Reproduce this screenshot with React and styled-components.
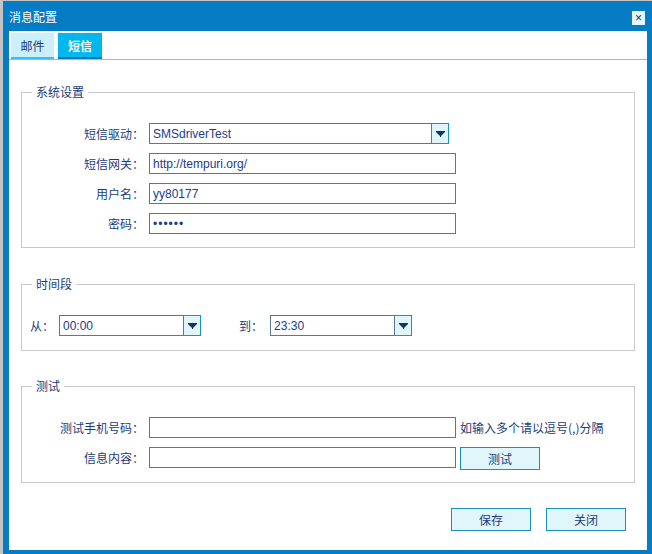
import React from "react";
import styled, { createGlobalStyle } from "styled-components";

const GlobalStyle = createGlobalStyle`
  html, body {
    margin: 0;
    padding: 0;
    background: #c4c4c4;
  }
  * {
    box-sizing: border-box;
  }
`;

const NAVY = "#1b3c7a";

function Arrow() {
  return (
    <svg width="9" height="6" viewBox="0 0 9 6">
      <path d="M0 0H9V1L5 5V6H4V5L0 1Z" fill="#0d3566" />
    </svg>
  );
}

function Combo({ width, value }) {
  return (
    <ComboBox $width={width}>
      <ComboText readOnly defaultValue={value} />
      <ComboButton>
        <Arrow />
      </ComboButton>
    </ComboBox>
  );
}

export default function App() {
  return (
    <>
      <GlobalStyle />
      <Page>
        <Dialog>
          <TitleBar>
            <Title>消息配置</Title>
            <CloseButton>×</CloseButton>
          </TitleBar>
          <Body>
            <Tabs>
              <Tab>邮件</Tab>
              <Tab $active>短信</Tab>
            </Tabs>

            <Content>
              <Group $top={24} $bottom={13}>
                <Legend>系统设置</Legend>
                <Rows>
                  <Row>
                    <Label>短信驱动：</Label>
                    <Combo width={300} value="SMSdriverTest" />
                  </Row>
                  <Row>
                    <Label>短信网关：</Label>
                    <TextInput readOnly defaultValue="http://tempuri.org/" />
                  </Row>
                  <Row>
                    <Label>用户名：</Label>
                    <TextInput readOnly defaultValue="yy80177" />
                  </Row>
                  <Row>
                    <Label>密码：</Label>
                    <TextInput type="password" readOnly defaultValue="123456" />
                  </Row>
                </Rows>
              </Group>

              <Group $gap={29} $bottom={13}>
                <Legend>时间段</Legend>
                <TimeRow>
                  <ShortLabel>从：</ShortLabel>
                  <Combo width={142} value="00:00" />
                  <ShortLabel $left={38}>到：</ShortLabel>
                  <Combo width={142} value="23:30" />
                </TimeRow>
              </Group>

              <Group $gap={28} $top={24}>
                <Legend>测试</Legend>
                <Rows>
                  <Row>
                    <Label>测试手机号码：</Label>
                    <TextInput readOnly defaultValue="" />
                    <Hint>如输入多个请以逗号(,)分隔</Hint>
                  </Row>
                  <Row>
                    <Label>信息内容：</Label>
                    <TextInput readOnly defaultValue="" />
                    <Button $ml={4}>测试</Button>
                  </Row>
                </Rows>
              </Group>

              <Footer>
                <Button>保存</Button>
                <Button>关闭</Button>
              </Footer>
            </Content>
          </Body>
        </Dialog>
      </Page>
    </>
  );
}

const Page = styled.div`
  width: 652px;
  height: 554px;
  padding: 1px 0 0 3px;
  font-family: "Noto Sans CJK SC", "Liberation Sans", sans-serif;
  font-size: 12px;
  color: ${NAVY};
`;

const Dialog = styled.div`
  display: flex;
  flex-direction: column;
  width: 649px;
  height: 553px;
  padding: 0 5px 4px 6px;
  background: #057cc4;
`;

const TitleBar = styled.div`
  display: flex;
  align-items: center;
  justify-content: space-between;
  height: 30px;
  padding: 0 2px 0 0;
`;

const Title = styled.div`
  color: #fff;
  font-size: 12px;
  line-height: 14px;
  margin-top: 1px;
`;

const CloseButton = styled.div`
  display: flex;
  align-items: center;
  justify-content: center;
  width: 13px;
  height: 14px;
  margin-top: 3px;
  background: #e4f8fd;
  color: #15355f;
  font-family: "Liberation Sans", sans-serif;
  font-size: 12px;
  line-height: 1;
`;

const Body = styled.div`
  flex: 1;
  display: flex;
  flex-direction: column;
  background: #fff;
`;

const Tabs = styled.div`
  display: flex;
  gap: 4px;
  height: 29px;
  padding: 2px 0 0 2px;
  border-bottom: 1px solid #b3b3b3;
`;

const Tab = styled.div`
  display: flex;
  align-items: center;
  justify-content: center;
  width: ${(p) => (p.$active ? 44 : 43)}px;
  height: 26px;
  padding-top: 1px;
  background: ${(p) => (p.$active ? "#00b7ee" : "#ccf0fb")};
  border-bottom: 2px solid ${(p) => (p.$active ? "#0a76b6" : "#33c2f3")};
  color: ${(p) => (p.$active ? "#fff" : NAVY)};
  font-weight: ${(p) => (p.$active ? 700 : 400)};
  font-size: 12px;
`;

const Content = styled.div`
  display: flex;
  flex-direction: column;
  padding: 0 12px 0 12px;
`;

const Group = styled.fieldset`
  margin: ${(p) => p.$gap ?? 25}px 0 0 0;
  padding: ${(p) => p.$top ?? 23}px 0 ${(p) => p.$bottom ?? 12}px 0;
  border: 1px solid #c9c9c9;
  min-width: 0;
`;

const Legend = styled.legend`
  margin-left: 10px;
  padding: 0 4px;
  font-size: 12px;
  line-height: 14px;
  color: ${NAVY};
`;

const Rows = styled.div`
  display: flex;
  flex-direction: column;
  gap: 9px;
`;

const Row = styled.div`
  display: flex;
  align-items: flex-start;
  min-height: 21px;
`;

const Label = styled.div`
  width: 122px;
  margin-right: 5px;
  text-align: right;
  line-height: 21px;
  white-space: nowrap;
`;

const ShortLabel = styled.div`
  margin-left: ${(p) => p.$left ?? 8}px;
  margin-right: ${(p) => (p.$left ? 7 : 5)}px;
  line-height: 21px;
`;

const TimeRow = styled.div`
  display: flex;
  align-items: center;
  padding-top: 1px;
  padding-bottom: 1px;
`;

const TextInput = styled.input`
  width: 307px;
  height: 21px;
  padding: 0 3px;
  border: 1px solid #2b87b6;
  outline: none;
  background: #fff;
  color: #1d3b86;
  font-family: "Liberation Sans", sans-serif;
  font-size: 12px;
  letter-spacing: ${(p) => (p.type === "password" ? "1px" : "0")};
`;

const ComboBox = styled.div`
  display: flex;
  width: ${(p) => p.$width}px;
  height: 21px;
`;

const ComboText = styled.input`
  flex: 1;
  min-width: 0;
  height: 21px;
  padding: 0 3px;
  border: 1px solid #5a7892;
  border-right: none;
  outline: none;
  color: #1d3b86;
  font-family: "Liberation Sans", sans-serif;
  font-size: 12px;
`;

const ComboButton = styled.div`
  display: flex;
  align-items: center;
  justify-content: center;
  width: 18px;
  height: 21px;
  border: 1px solid #1a93c0;
  border-left-color: #5a7892;
  background: #e0f6fb;
`;

const Hint = styled.div`
  margin-left: 4px;
  line-height: 21px;
  white-space: nowrap;
`;

const Button = styled.div`
  display: flex;
  align-items: center;
  justify-content: center;
  width: 80px;
  height: 23px;
  margin-left: ${(p) => p.$ml ?? 0}px;
  border: 1px solid #1a8fbd;
  background: #e0f6fb;
  color: ${NAVY};
  font-size: 12px;
`;

const Footer = styled.div`
  display: flex;
  justify-content: flex-end;
  gap: 15px;
  margin-top: 25px;
  padding-right: 9px;
`;
